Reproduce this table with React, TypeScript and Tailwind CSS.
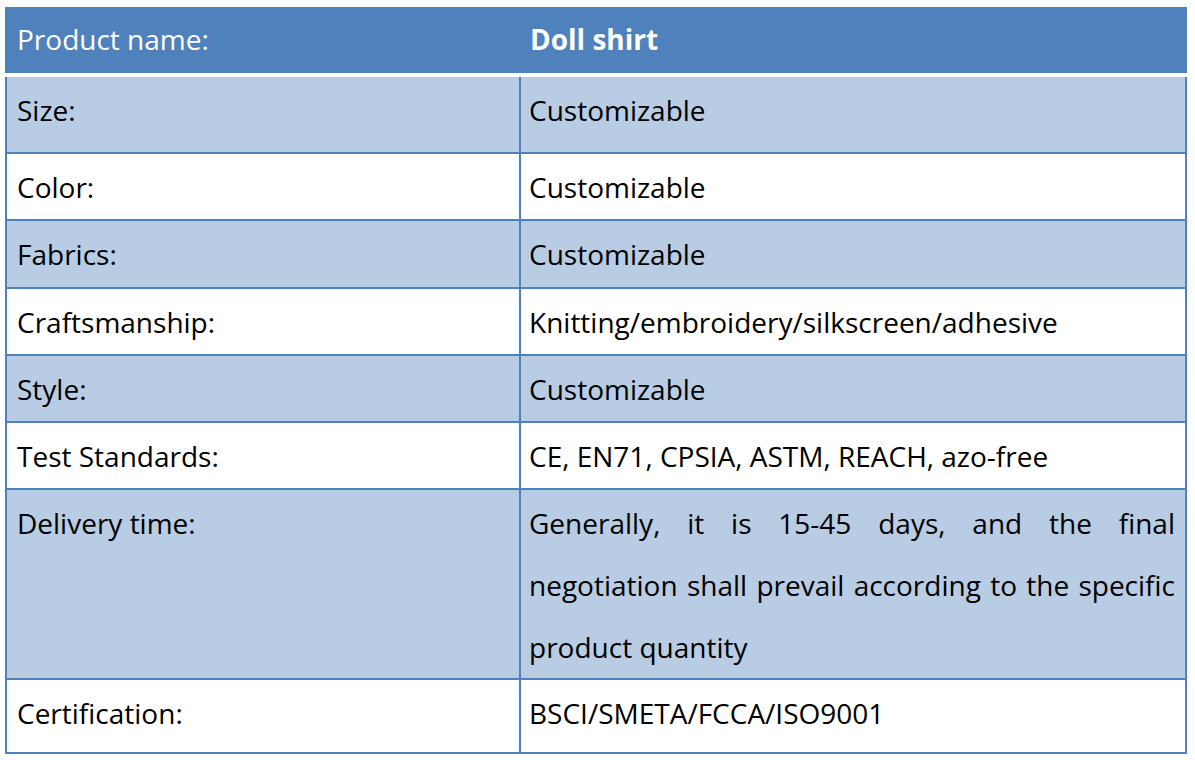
const rows: { label: string; value: string; shade: boolean; h: string }[] = [
  { label: "Size:", value: "Customizable", shade: true, h: "h-[77px]" },
  { label: "Color:", value: "Customizable", shade: false, h: "h-[67px]" },
  { label: "Fabrics:", value: "Customizable", shade: true, h: "h-[68px]" },
  { label: "Craftsmanship:", value: "Knitting/embroidery/silkscreen/adhesive", shade: false, h: "h-[67px]" },
  { label: "Style:", value: "Customizable", shade: true, h: "h-[67px]" },
  { label: "Test Standards:", value: "CE, EN71, CPSIA, ASTM, REACH, azo-free", shade: false, h: "h-[67px]" },
];

export default function App() {
  return (
    <div className="w-[1195px] h-[760px] bg-white pt-[7px] pl-[5px] font-['Open_Sans',sans-serif] text-[28px] text-black">
      <div className="w-[1182px]">
        <div className="h-[66px] bg-[#4f81bd] flex text-white">
          <div className="w-[516px] pl-[12px] pt-[15px] leading-[34px]">Product name:</div>
          <div className="flex-1 pl-[9px] pt-[15px] leading-[34px] font-bold">Doll shirt</div>
        </div>
        <div className="h-[4px]" />
        <div className="border-x-2 border-[#4f81bd]">
          {rows.map((r) => (
            <div
              key={r.label}
              className={`flex border-b-2 border-[#4f81bd] ${r.h} ${r.shade ? "bg-[#b8cce4]" : "bg-white"}`}
            >
              <div className="w-[514px] border-r-2 border-[#4f81bd] pl-[10px] pt-[16px] leading-[34px]">{r.label}</div>
              <div className="flex-1 pl-[8px] pt-[16px] leading-[34px]">{r.value}</div>
            </div>
          ))}
          <div className="flex border-b-2 border-[#4f81bd] h-[190px] bg-[#b8cce4]">
            <div className="w-[514px] border-r-2 border-[#4f81bd] pl-[10px] pt-[16px] leading-[34px]">Delivery time:</div>
            <div className="flex-1 pl-[8px] pr-[10px] pt-[2px] leading-[62px] whitespace-nowrap">
              <div className="text-justify [text-align-last:justify]">Generally, it is 15-45 days, and the final</div>
              <div className="text-justify [text-align-last:justify]">negotiation shall prevail according to the specific</div>
              <div>product quantity</div>
            </div>
          </div>
          <div className="flex border-b-2 border-[#4f81bd] h-[74px] bg-white">
            <div className="w-[514px] border-r-2 border-[#4f81bd] pl-[10px] pt-[16px] leading-[34px]">Certification:</div>
            <div className="flex-1 pl-[8px] pt-[16px] leading-[34px]">BSCI/SMETA/FCCA/ISO9001</div>
          </div>
        </div>
      </div>
    </div>
  );
}
